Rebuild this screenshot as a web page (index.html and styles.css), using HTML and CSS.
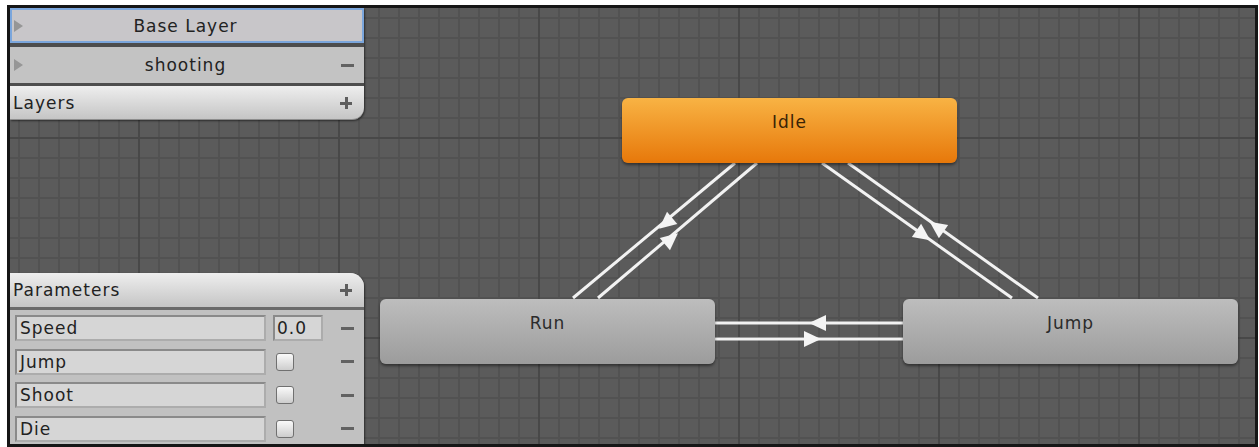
FILE: index.html
```html
<!DOCTYPE html>
<html lang="en">
<head>
    <meta charset="UTF-8">
    <meta name="viewport" content="width=device-width, initial-scale=1.0">
    <title>Animator</title>
    <link rel="stylesheet" href="styles.css">
</head>
<body>
    <div class="frame">
        <div class="graph">
            <!-- transitions between the states -->
            <svg class="links" width="1245" height="436" viewBox="0 0 1245 436">
                <g class="link">
                    <line x1="725" y1="155" x2="563" y2="290"/>
                    <line x1="747" y1="155" x2="588" y2="290"/>
                    <line x1="812" y1="155" x2="1002" y2="290"/>
                    <line x1="838" y1="155" x2="1028" y2="290"/>
                    <line x1="705" y1="315" x2="893" y2="315"/>
                    <line x1="705" y1="331" x2="893" y2="331"/>
                </g>
                <g class="arrow">
                    <polygon points="9,0 -8,-8 -8,8" transform="translate(656 215) rotate(140.2)"/>
                    <polygon points="9,0 -8,-8 -8,8" transform="translate(661 231) rotate(-39.8)"/>
                    <polygon points="9,0 -8,-8 -8,8" transform="translate(913 227) rotate(35.4)"/>
                    <polygon points="9,0 -8,-8 -8,8" transform="translate(927 219) rotate(-144.6)"/>
                    <polygon points="9,0 -8,-8 -8,8" transform="translate(808 315) rotate(180)"/>
                    <polygon points="9,0 -8,-8 -8,8" transform="translate(802 331)"/>
                </g>
            </svg>

            <div class="state idle">Idle</div>
            <div class="state run">Run</div>
            <div class="state jump">Jump</div>

            <div class="panel layers">
                <div class="layer-row base">
                    <span class="fold"></span>
                    <span class="layer-name">Base Layer</span>
                    <span></span>
                </div>
                <div class="layer-row">
                    <span class="fold"></span>
                    <span class="layer-name">shooting</span>
                    <span class="minus"></span>
                </div>
                <div class="panel-head layers-head">
                    <span>Layers</span>
                    <span class="plus"></span>
                </div>
            </div>

            <div class="panel params">
                <div class="panel-head params-head">
                    <span>Parameters</span>
                    <span class="plus"></span>
                </div>
                <div class="param-list">
                    <div class="field">Speed</div>
                    <div class="field value">0.0</div>
                    <span class="minus"></span>

                    <div class="field">Jump</div>
                    <div class="check-cell"><span class="check"></span></div>
                    <span class="minus"></span>

                    <div class="field">Shoot</div>
                    <div class="check-cell"><span class="check"></span></div>
                    <span class="minus"></span>

                    <div class="field">Die</div>
                    <div class="check-cell"><span class="check"></span></div>
                    <span class="minus"></span>
                </div>
            </div>
        </div>
    </div>
</body>
</html>
```

FILE: styles.css
```css
body {
    margin: 0;
    background-color: #fff;
    font-family: "DejaVu Sans", Verdana, sans-serif;
    color: #222;
}

.frame {
    margin: 5px 0 0 7px;
    width: 1251px;
    height: 442px;
    box-sizing: border-box;
    border: 3px solid #161616;
}

/* animator grid */
.graph {
    position: relative;
    width: 1245px;
    height: 436px;
    overflow: hidden;
    background-color: #5b5b5b;
    background-image:
        linear-gradient(90deg, #484848 2px, transparent 2px),
        linear-gradient(180deg, #484848 2px, transparent 2px),
        linear-gradient(90deg, #525252 2px, transparent 2px),
        linear-gradient(180deg, #525252 2px, transparent 2px);
    background-size: 200px 100%, 100% 200px, 20px 100%, 100% 20px;
    background-position: 128px 0, 0 129px, 8px 0, 0 9px;
}

.links {
    position: absolute;
    left: 0;
    top: 0;
}

.link line {
    stroke: #f2f2f2;
    stroke-width: 3;
}

.arrow polygon {
    fill: #f4f4f4;
}

/* states */
.state {
    position: absolute;
    width: 335px;
    height: 65px;
    box-sizing: border-box;
    padding-top: 14px;
    border-radius: 6px;
    text-align: center;
    font-size: 17px;
    line-height: 20px;
    letter-spacing: 1px;
    color: #2b2b2b;
    background: linear-gradient(#bdbdbd, #9c9c9c);
    box-shadow: 0 2px 3px rgba(0, 0, 0, 0.45);
}

.idle {
    left: 612px;
    top: 90px;
    color: #3a2306;
    background: linear-gradient(#f8b344, #e7780a);
}

.run {
    left: 370px;
    top: 291px;
}

.jump {
    left: 893px;
    top: 291px;
}

/* side panels */
.panel {
    position: absolute;
    left: 0;
    width: 354px;
    font-size: 17px;
    letter-spacing: 1px;
    box-shadow: 1px 1px 2px rgba(0, 0, 0, 0.5);
}

.layers {
    top: 0;
    border-bottom-right-radius: 12px;
}

.layer-row {
    display: grid;
    grid-template-columns: 20px 1fr 20px;
    align-items: center;
    height: 39px;
    box-sizing: border-box;
    padding: 0 7px 0 4px;
    background-color: #c3c3c3;
    border-bottom: 3px solid #4d4d4d;
}

.layer-row.base {
    border-bottom-width: 4px;
    background-color: #c8c6c9;
    box-shadow: inset 0 0 0 2px #7ba6dc;
}

.layer-name {
    text-align: center;
}

.fold {
    width: 0;
    height: 0;
    border-left: 9px solid #969696;
    border-top: 6px solid transparent;
    border-bottom: 6px solid transparent;
}

.panel-head {
    display: flex;
    justify-content: space-between;
    align-items: center;
    height: 34px;
    box-sizing: border-box;
    padding: 0 12px 0 3px;
    background: linear-gradient(#eeeeee, #c5c5c5);
}

.layers-head {
    border-bottom-right-radius: 12px;
    border-bottom: 1px solid #8d8d8d;
}

.params {
    bottom: 0;
    background-color: #c1c1c1;
    border-top-right-radius: 14px;
}

.params-head {
    border-top-right-radius: 14px;
    border-bottom: 3px solid #6a6a6a;
    height: 37px;
}

.param-list {
    display: grid;
    grid-template-columns: 251px 50px 34px;
    grid-auto-rows: 26px;
    column-gap: 7px;
    row-gap: 7.5px;
    align-items: center;
    padding: 5px 0 2.5px 5px;
}

.field {
    height: 26px;
    box-sizing: border-box;
    padding-left: 3px;
    line-height: 22px;
    background-color: #d6d6d6;
    border: 2px solid #9b9b9b;
    border-color: #8a8a8a #acacac #acacac #8a8a8a;
}

.value {
    padding-left: 2px;
}

.check-cell {
    display: flex;
    align-items: center;
    padding-left: 3px;
}

.check {
    width: 18px;
    height: 18px;
    box-sizing: border-box;
    border: 1px solid #707070;
    border-radius: 3px;
    background: linear-gradient(#fafafa, #cdcdcd);
}

.minus {
    justify-self: center;
    width: 13px;
    height: 3px;
    background-color: #626262;
}

.plus {
    position: relative;
    width: 12px;
    height: 12px;
}

.plus::before,
.plus::after {
    content: "";
    position: absolute;
    background-color: #5e5e5e;
}

.plus::before {
    left: 0;
    top: 5px;
    width: 12px;
    height: 3px;
}

.plus::after {
    left: 5px;
    top: 0;
    width: 3px;
    height: 12px;
}
```
